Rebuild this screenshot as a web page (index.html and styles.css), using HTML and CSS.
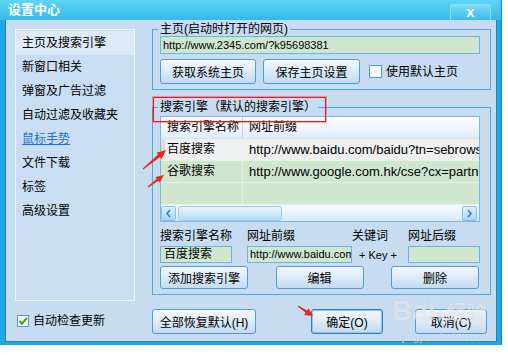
FILE: index.html
```html
<!DOCTYPE html>
<html lang="zh-CN">
<head>
    <meta charset="UTF-8">
    <title>设置中心</title>
    <link rel="stylesheet" href="styles.css">
</head>
<body>

<div class="window">
    <div class="titlebar">
        <span class="title">设置中心</span>
        <span class="close">x</span>
    </div>

    <div class="main">
        <ul class="menu">
            <li class="active">主页及搜索引擎</li>
            <li>新窗口相关</li>
            <li>弹窗及广告过滤</li>
            <li>自动过滤及收藏夹</li>
            <li class="link">鼠标手势</li>
            <li>文件下载</li>
            <li>标签</li>
            <li>高级设置</li>
        </ul>

        <div class="panel">
            <fieldset class="group">
                <legend>主页(启动时打开的网页)</legend>
                <div class="field url">http://www.2345.com/?k95698381</div>
                <div class="row">
                    <button class="btn home-btn">获取系统主页</button>
                    <button class="btn home-btn save">保存主页设置</button>
                    <label class="check"><span class="box"></span>使用默认主页</label>
                </div>
            </fieldset>

            <fieldset class="group engines">
                <legend>搜索引擎（默认的搜索引擎）</legend>
                <div class="list">
                    <div class="list-head">
                        <span class="c1">搜索引擎名称</span>
                        <span class="c2">网址前缀</span>
                    </div>
                    <div class="list-row gray">
                        <span class="c1">百度搜索</span>
                        <span class="c2">http://www.baidu.com/baidu?tn=sebrowser</span>
                    </div>
                    <div class="list-row">
                        <span class="c1">谷歌搜索</span>
                        <span class="c2">http://www.google.com.hk/cse?cx=partner</span>
                    </div>
                    <div class="list-row">
                        <span class="c1"></span>
                        <span class="c2"></span>
                    </div>
                    <div class="hscroll">
                        <span class="sb-btn">
                            <svg width="7" height="9" viewBox="0 0 7 9"><path d="M5 1 L2 4.5 L5 8" fill="none" stroke="#2f7fc6" stroke-width="1.6"/></svg>
                        </span>
                        <span class="thumb"></span>
                        <span class="sb-btn right">
                            <svg width="7" height="9" viewBox="0 0 7 9"><path d="M2 1 L5 4.5 L2 8" fill="none" stroke="#2f7fc6" stroke-width="1.6"/></svg>
                        </span>
                    </div>
                </div>

                <div class="form">
                    <span>搜索引擎名称</span>
                    <span>网址前缀</span>
                    <span>关键词</span>
                    <span>网址后缀</span>
                    <div class="field name">百度搜索</div>
                    <div class="field prefix">http://www.baidu.com/baidu?tn=sebrowser</div>
                    <span class="key">+ Key +</span>
                    <div class="field suffix"></div>
                </div>

                <div class="row spread">
                    <button class="btn small">添加搜索引擎</button>
                    <button class="btn small">编辑</button>
                    <button class="btn small">删除</button>
                </div>
            </fieldset>
        </div>

        <label class="check auto">
            <span class="box">
                <svg width="10" height="10" viewBox="0 0 10 10"><path d="M1.5 5 L4 7.8 L8.8 1.8" fill="none" stroke="#2aa02a" stroke-width="2"/></svg>
            </span>自动检查更新
        </label>

        <div class="footer">
            <button class="btn reset">全部恢复默认(H)</button>
            <button class="btn ok">确定(O)</button>
            <button class="btn cancel">取消(C)</button>
        </div>
    </div>

    <!-- annotations over the screenshot -->
    <div class="red-box"></div>
    <svg class="marks" width="508" height="355" viewBox="0 0 508 355">
        <polygon fill="#e8281e" points="143.3,169.4 160.1,157 161.6,158.9 166,150 156.5,152.7 158.1,154.6 142.7,168.6"/>
        <polygon fill="#e8281e" points="148.3,187.4 158.4,180.8 159.7,182.6 164,175 155.5,177 156.8,178.8 147.7,186.6"/>
        <polygon fill="#e8281e" points="297.7,306.4 305.7,312.7 304.2,314.9 313,316 308.6,308.3 307.1,310.5 298.3,305.6"/>
    </svg>
    <div class="watermark">
        <span class="wm-big">Bai<span class="paw">●</span></span><span class="wm-cn">经验</span>
        <div class="wm-url">jingyan.baidu.com</div>
    </div>
</div>

</body>
</html>
```

FILE: styles.css
```css
* {
    box-sizing: border-box;
}

body {
    margin: 0;
    background: #fff;
    font-family: "Liberation Sans", "Noto Sans CJK SC", sans-serif;
    font-size: 12px;
    color: #000;
}

.window {
    position: relative;
    width: 502px;
    height: 345px;
    background: #1fa9e1;
    border-right: 1px solid #1480bb;
    display: flex;
    flex-direction: column;
}

.titlebar {
    height: 20px;
    flex: none;
    display: flex;
    justify-content: space-between;
    align-items: center;
    padding: 0 10px 0 8px;
    background: linear-gradient(#5fd4f6, #34b9e9);
}

.title {
    color: #fff;
    font-weight: bold;
    font-size: 13px;
    line-height: 14px;
}

.close {
    align-self: flex-end;
    width: 41px;
    height: 16px;
    border: 1px solid #8adcf6;
    border-bottom: none;
    border-radius: 3px 3px 0 0;
    background: linear-gradient(#7adbf7, #38bbea);
    color: #fff;
    font-weight: bold;
    font-size: 15px;
    line-height: 13px;
    text-align: center;
}

.main {
    flex: 1;
    margin: 0 4px 3px 5px;
    padding: 3px 5px 0 9px;
    background: #c7dcf0;
    border: 1px solid #1d82c4;
    border-top: none;
    display: grid;
    grid-template-columns: 120px 1fr;
    grid-template-rows: 278px 1fr;
    column-gap: 17px;
}

.menu {
    list-style: none;
    margin: 6px 0 0;
    padding: 1px 0 0;
    height: 272px;
    border: 1px solid #eef5fc;
    background: #c9def2;
}

.menu li {
    height: 24px;
    line-height: 24px;
    padding-left: 6px;
}

.menu li.active {
    background: #dce9f6;
}

.menu li.link {
    color: #2a6fd0;
    text-decoration: underline;
}

.panel {
    display: flex;
    flex-direction: column;
}

.group {
    margin: 0;
    width: 339px;
    min-width: 0;
    padding: 0 10px 5px 7px;
    border: 1px solid #4ea8e0;
}

.group legend {
    padding: 0 2px;
    margin-left: -2px;
    line-height: 13px;
}

.engines {
    margin-top: 11px;
}

.field {
    height: 18px;
    border: 1px solid #6ab4e4;
    background: #cfe7cf;
    font-size: 11px;
    line-height: 16px;
    padding-left: 2px;
    white-space: nowrap;
    overflow: hidden;
}

.row {
    display: flex;
    align-items: center;
    margin-top: 5px;
}

.btn {
    height: 25px;
    padding: 0;
    border: 1px solid #4d9cd6;
    border-radius: 3px;
    background: linear-gradient(#f4f9fe, #deecf9 45%, #c2daf1);
    box-shadow: inset 0 1px 0 #fff;
    font-family: inherit;
    font-size: 12px;
    color: #000;
}

.home-btn {
    width: 96px;
}

.home-btn.save {
    width: 97px;
    margin-left: 7px;
}

.check {
    display: flex;
    align-items: center;
    gap: 4px;
    line-height: 14px;
}

.row .check {
    margin-left: 9px;
}

.box {
    width: 13px;
    height: 13px;
    border: 1px solid #4d9bd6;
    background: #fff;
    display: flex;
    align-items: center;
    justify-content: center;
}

.list {
    margin-top: 2px;
    height: 106px;
    border: 1px solid #7cb7e2;
    background: #cfe7cf;
    display: flex;
    flex-direction: column;
}

.list-head,
.list-row {
    display: flex;
    height: 22px;
    line-height: 21px;
    flex: none;
}

.list-head {
    background: linear-gradient(#fdfeff, #e0edf9);
    border-bottom: 1px solid #d3e4f3;
}

.list-row {
    font-size: 13px;
    border-bottom: 1px solid #e6f1e6;
}

.list-row.gray {
    background: #eeefef;
    box-shadow: inset 4px 0 #cfe7cf;
}

.c1 {
    width: 82px;
    flex: none;
    padding-left: 6px;
    font-size: 12px;
    border-right: 1px solid #e4f0e4;
}

.list-head .c1 {
    border-right-color: #b9d3ea;
}

.list-row.gray .c1 {
    border-right-color: transparent;
}

.c2 {
    padding-left: 6px;
    white-space: nowrap;
    overflow: hidden;
}

.hscroll {
    height: 16px;
    display: flex;
    align-items: center;
    padding-right: 2px;
    background: linear-gradient(#f6fbfe, #d5eaf8);
}

.sb-btn {
    width: 15px;
    height: 15px;
    border: 1px solid #86c0ea;
    border-radius: 2px;
    background: linear-gradient(#dcf0fc, #a9d5f3);
    display: flex;
    align-items: center;
    justify-content: center;
}

.sb-btn.right {
    margin-left: auto;
}

.thumb {
    margin-left: 2px;
    width: 104px;
    height: 15px;
    border: 1px solid #9ccbee;
    border-radius: 3px;
    background: linear-gradient(#eaf6fd, #b3dbf5);
}

.form {
    margin-top: 7px;
    display: grid;
    grid-template-columns: 87px 105px 56px 72px;
    grid-template-rows: 14px 17px;
    row-gap: 3px;
    line-height: 14px;
}

.form .field {
    height: 17px;
    line-height: 15px;
}

.field.name {
    width: 72px;
    font-size: 12px;
    padding-left: 3px;
}

.key {
    justify-self: center;
    align-self: center;
    font-size: 11px;
    margin-right: 4px;
}

.row.spread {
    margin-top: 3px;
    justify-content: space-between;
    padding-right: 1px;
}

.btn.small {
    width: 88px;
    height: 23px;
}

.check.auto {
    align-self: start;
    margin: 13px 0 0 2px;
}

.check.auto .box {
    width: 12px;
    height: 12px;
}

.footer {
    padding-top: 8px;
    display: flex;
    align-items: flex-start;
}

.reset {
    width: 104px;
}

.ok {
    width: 72px;
    margin-left: 55px;
    border-color: #2f7fc8;
    box-shadow: inset 0 0 0 1px #8cc4ee;
}

.cancel {
    width: 72px;
    margin-left: 32px;
}

.red-box {
    position: absolute;
    left: 153px;
    top: 97px;
    width: 173px;
    height: 25px;
    border: 1px solid #ff1010;
    box-shadow: 0 0 0 1px rgba(255, 30, 30, 0.35);
}

.marks {
    position: absolute;
    left: 0;
    top: 0;
    pointer-events: none;
}

.watermark {
    position: absolute;
    left: 392px;
    top: 294px;
    color: rgba(255, 255, 255, 0.55);
    text-shadow: 0 0 1px rgba(120, 140, 160, 0.35);
    white-space: nowrap;
    pointer-events: none;
}

.wm-big {
    font-size: 28px;
    font-weight: bold;
    line-height: 34px;
}

.paw {
    font-size: 18px;
}

.wm-cn {
    font-size: 20px;
    font-weight: bold;
}

.wm-url {
    font-size: 11px;
    line-height: 12px;
    margin-left: 10px;
}
```
